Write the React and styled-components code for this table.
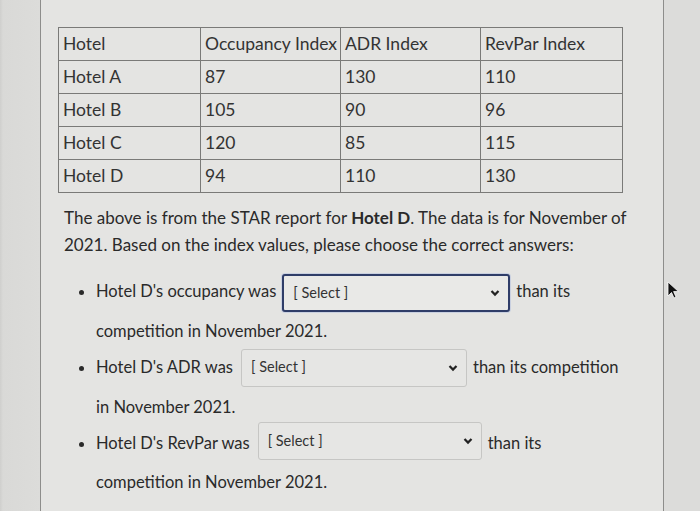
import React from "react";
import styled, { createGlobalStyle } from "styled-components";

const Global = createGlobalStyle`
  html, body {
    margin: 0;
    padding: 0;
    background: #dedede;
  }
  body {
    font-family: Lato, "Open Sans", sans-serif;
    color: #2d2d2d;
  }
`;

const Page = styled.div`
  width: 700px;
  height: 511px;
  overflow: hidden;
  position: relative;
  background: linear-gradient(90deg, #cfcfcd 0, #d9d9d7 3px, #dcdcda 40px);
  display: flex;
  padding-left: 40px;
  box-sizing: border-box;
`;

const Panel = styled.div`
  width: 624px;
  height: 100%;
  box-sizing: border-box;
  background: #e4e4e2;
  border-left: 1.5px solid #8d8d8b;
  border-right: 1.5px solid #8d8d8b;
  padding: 27px 0 0 17px;
`;

const Table = styled.table`
  border-collapse: collapse;
  table-layout: fixed;
  width: 564px;
  font-size: 17.5px;
  color: #333;
  td {
    border: 1.5px solid #7a7a78;
    height: 32px;
    padding: 0 4px;
    line-height: 1;
    vertical-align: middle;
    white-space: nowrap;
    overflow: hidden;
  }
`;

const Col = styled.col`
  width: ${(p) => p.$w}px;
`;

const Para = styled.p`
  margin: 11px 0 0 6px;
  width: 580px;
  font-size: 17px;
  line-height: 27px;
  color: #2a2a2a;
`;

const List = styled.ul`
  margin: 14px 0 0 0;
  padding: 0 0 0 38px;
  list-style: disc;
  font-size: 16.5px;
  color: #2a2a2a;
`;

const Item = styled.li`
  line-height: 38px;
  margin-bottom: -2px;
  width: ${(p) => p.$w}px;
`;

const Select = styled.span`
  display: inline-flex;
  align-items: center;
  justify-content: space-between;
  box-sizing: border-box;
  vertical-align: middle;
  width: ${(p) => p.$w}px;
  height: 38px;
  margin: 0 6px 0 ${(p) => p.$gap}px;
  padding: 0 8px 0 9px;
  border-radius: 3px;
  background: ${(p) => (p.$focus ? "#e9e9e7" : "#e6e6e4")};
  border: ${(p) => (p.$focus ? "2px solid #2f3d68" : "1px solid #c6c6c4")};
  box-shadow: ${(p) => (p.$focus ? "0 0 0 1px #c9d0e0" : "none")};
  font-size: 14.5px;
  line-height: 1;
  color: #333;
  position: relative;
  top: ${(p) => p.$top}px;
`;

const Chevron = () => (
  <svg width="10" height="8" viewBox="0 0 10 8">
    <path d="M1.5 2 L5 5.6 L8.5 2" fill="none" stroke="#222" strokeWidth="2.2" />
  </svg>
);

const Cursor = styled.svg`
  position: absolute;
  left: 666px;
  top: 281px;
`;

const rows = [
  ["Hotel", "Occupancy Index", "ADR Index", "RevPar Index"],
  ["Hotel A", "87", "130", "110"],
  ["Hotel B", "105", "90", "96"],
  ["Hotel C", "120", "85", "115"],
  ["Hotel D", "94", "110", "130"],
];
const widths = [142, 140, 140, 142];

const Dropdown = ({ w, gap, focus, top }) => (
  <Select $w={w} $gap={gap} $focus={focus} $top={top}>
    <span>[ Select ]</span>
    <Chevron />
  </Select>
);

export default function App() {
  return (
    <Page>
      <Global />
      <Panel>
        <Table>
          <colgroup>
            {widths.map((w, i) => (
              <Col key={i} $w={w} />
            ))}
          </colgroup>
          <tbody>
            {rows.map((r, i) => (
              <tr key={i}>
                {r.map((c, j) => (
                  <td key={j}>{c}</td>
                ))}
              </tr>
            ))}
          </tbody>
        </Table>
        <Para>
          The above is from the STAR report for <b>Hotel D</b>. The data is for
          November of 2021. Based on the index values, please choose the correct
          answers:
        </Para>
        <List>
          <Item $w={520}>
            Hotel D's occupancy was
            <Dropdown w={228} gap={6} focus top={0} />
            than its competition in November 2021.
          </Item>
          <Item $w={528}>
            Hotel D's ADR was
            <Dropdown w={226} gap={8} top={-1} />
            than its competition in November 2021.
          </Item>
          <Item $w={520}>
            Hotel D's RevPar was
            <Dropdown w={224} gap={8} top={-3} />
            than its competition in November 2021.
          </Item>
        </List>
      </Panel>
      <Cursor width="16" height="20" viewBox="0 0 16 20">
        <path d="M2 1 L2 15 L5.5 11.5 L8 17 L10 16 L7.6 10.6 L12.5 10.6 Z" fill="#111" stroke="#fff" strokeWidth="0.8" />
      </Cursor>
    </Page>
  );
}
